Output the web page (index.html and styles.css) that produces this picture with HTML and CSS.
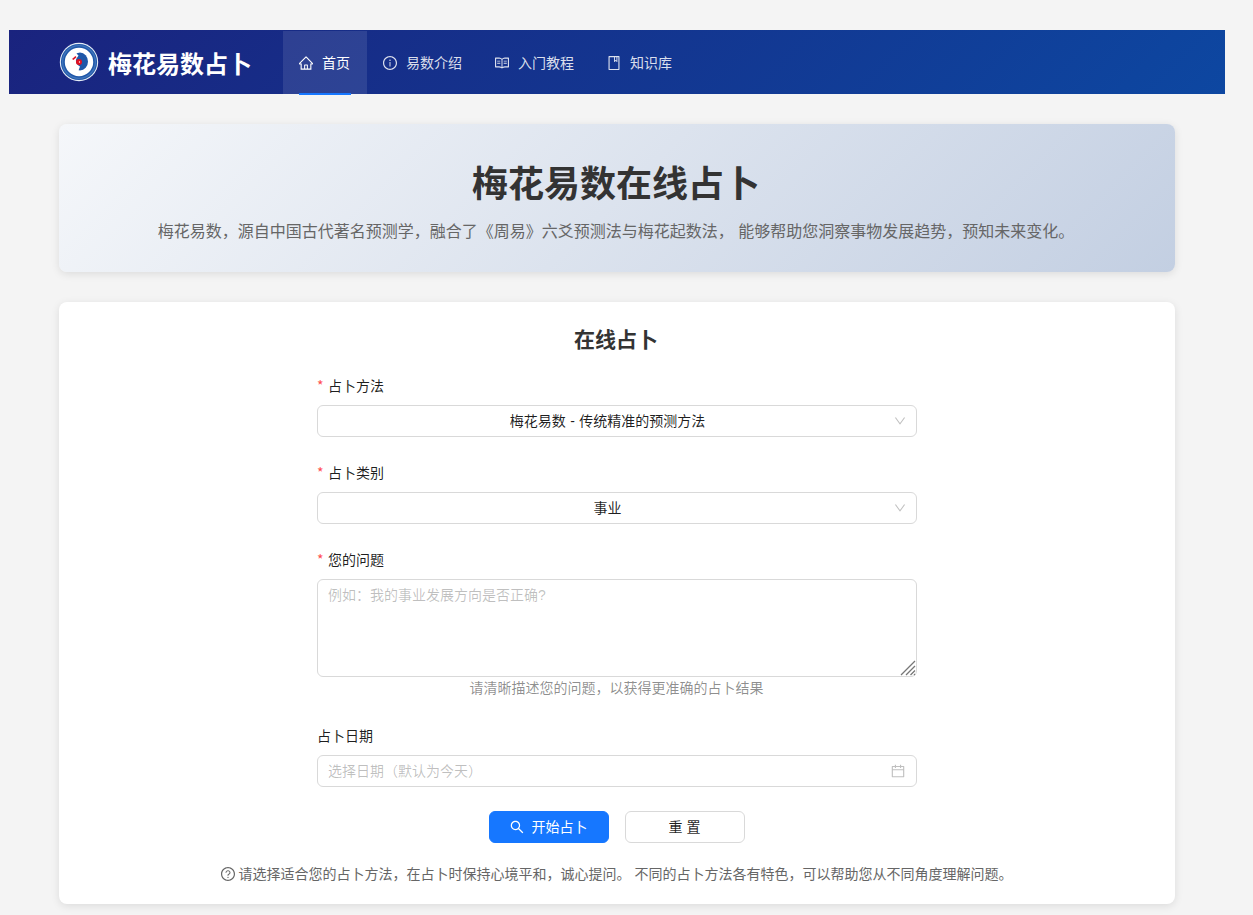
FILE: index.html
```
<!DOCTYPE html>
<html lang="zh-CN">
<head>
    <meta charset="UTF-8">
    <meta name="viewport" content="width=device-width, initial-scale=1.0">
    <title>梅花易数占卜</title>
    <link rel="stylesheet" href="styles.css">
</head>
<body>

    <header class="header">
        <div class="logo">
            <svg class="logo-img" viewBox="0 0 40 40">
                <circle cx="20" cy="20" r="19.2" fill="#e6edf6"/>
                <circle cx="20" cy="20" r="18.1" fill="#1f57a8"/>
                <circle cx="20" cy="20" r="16.4" fill="none" stroke="#3f74bb" stroke-width="1.4"/>
                <circle cx="20" cy="20" r="14.2" fill="#fff"/>
                <ellipse cx="21" cy="19.5" rx="8" ry="9" fill="#1f57a8"/>
                <path d="M12 14l5-3 2.500 2.500-2 3c-1.500 3 0 6 3.500 8l-1.500 4c-6-.5-9-8-7.500-14.500z" fill="#fff"/>
                <path d="M13 17l3.500-3 1 1.200-3 2.800z" fill="#e01022"/>
                <circle cx="20" cy="20" r="3" fill="#e01022"/>
                <circle cx="20.500" cy="20" r="0.700" fill="#fff"/>
            </svg>
            <span class="logo-text">梅花易数占卜</span>
        </div>
        <nav class="menu">
            <a class="menu-item active">
                <svg class="icon" viewBox="64 64 896 896"><path d="M946.5 505L560.1 118.8l-25.9-25.9a31.5 31.5 0 00-44.4 0L77.5 505a63.9 63.9 0 00-18.8 46c.4 35.2 29.7 63.3 64.9 63.3h42.5V940h691.8V614.3h43.4c17.1 0 33.2-6.7 45.3-18.8a63.6 63.6 0 0018.7-45.3c0-17-6.7-33.1-18.8-45.2zM568 868H456V664h112v204zm217.9-325.7V868H632V640c0-22.1-17.9-40-40-40H432c-22.1 0-40 17.9-40 40v228H238.1V542.3h-96l370-369.7 23.1 23.1L882 542.3h-96.1z"/></svg>
                <span>首页</span>
            </a>
            <a class="menu-item">
                <svg class="icon" viewBox="64 64 896 896"><path d="M512 64C264.6 64 64 264.6 64 512s200.6 448 448 448 448-200.6 448-448S759.4 64 512 64zm0 820c-205.4 0-372-166.6-372-372s166.6-372 372-372 372 166.6 372 372-166.6 372-372 372z"/><path d="M464 336a48 48 0 1096 0 48 48 0 10-96 0zm72 112h-48c-4.4 0-8 3.6-8 8v272c0 4.4 3.6 8 8 8h48c4.4 0 8-3.6 8-8V456c0-4.4-3.6-8-8-8z"/></svg>
                <span>易数介绍</span>
            </a>
            <a class="menu-item">
                <svg class="icon" viewBox="64 64 896 896"><path d="M928 161H699.2c-49.1 0-97.1 14.1-138.4 40.7L512 233l-48.8-31.3A255.2 255.2 0 00324.8 161H96c-17.7 0-32 14.3-32 32v568c0 17.7 14.3 32 32 32h228.8c49.1 0 97.1 14.1 138.4 40.7l44.4 28.6c1.3.8 2.8 1.3 4.3 1.3s3-.4 4.3-1.3l44.4-28.6C602 807.1 650.1 793 699.2 793H928c17.7 0 32-14.3 32-32V193c0-17.7-14.3-32-32-32zM324.8 721H136V233h188.8c35.4 0 69.8 10.1 99.5 29.2l48.8 31.3 6.9 4.5v462c-47.6-25.6-100.8-39-155.2-39zm563.2 0H699.2c-54.4 0-107.6 13.4-155.2 39V298l6.9-4.5 48.8-31.3c29.7-19.1 64.1-29.2 99.5-29.2H888v488zM396.9 361H211.1c-3.9 0-7.1 3.4-7.1 7.5v45c0 4.1 3.2 7.5 7.1 7.5h185.7c3.9 0 7.1-3.4 7.1-7.5v-45c.1-4.1-3.1-7.5-7-7.5zm223.1 7.5v45c0 4.1 3.2 7.5 7.1 7.5h185.7c3.9 0 7.1-3.4 7.1-7.5v-45c0-4.1-3.2-7.5-7.1-7.5H627.1c-3.9 0-7.1 3.4-7.1 7.5zM396.9 501H211.1c-3.9 0-7.1 3.4-7.1 7.5v45c0 4.1 3.2 7.5 7.1 7.5h185.7c3.9 0 7.1-3.4 7.1-7.5v-45c.1-4.1-3.1-7.5-7-7.5zm416 0H627.1c-3.9 0-7.1 3.4-7.1 7.5v45c0 4.1 3.2 7.5 7.1 7.5h185.7c3.9 0 7.1-3.4 7.1-7.5v-45c.1-4.1-3.1-7.5-7-7.5z"/></svg>
                <span>入门教程</span>
            </a>
            <a class="menu-item">
                <svg class="icon" viewBox="64 64 896 896"><path d="M832 64H192c-17.7 0-32 14.3-32 32v832c0 17.7 14.3 32 32 32h640c17.7 0 32-14.3 32-32V96c0-17.7-14.3-32-32-32zm-260 72h96v209.9L621.5 312 572 347.4V136zm220 752H232V136h280v296.9c0 3.3 1 6.6 3 9.3a15.9 15.9 0 0022.3 3.7l83.8-59.9 81.4 59.4c2.7 2 6 3.1 9.4 3.1 8.8 0 16-7.2 16-16V136h64v752z"/></svg>
                <span>知识库</span>
            </a>
        </nav>
    </header>

    <main class="content">
        <section class="banner">
            <h1>梅花易数在线占卜</h1>
            <p>梅花易数，源自中国古代著名预测学，融合了《周易》六爻预测法与梅花起数法， 能够帮助您洞察事物发展趋势，预知未来变化。</p>
        </section>

        <section class="card">
            <h2>在线占卜</h2>
            <form class="form">
                <div class="form-item">
                    <label class="required">占卜方法</label>
                    <div class="select">
                        <span class="select-value">梅花易数 - 传统精准的预测方法</span>
                        <svg class="arrow" viewBox="64 64 896 896"><path d="M884 256h-75c-5.1 0-9.9 2.5-12.9 6.6L512 654.2 227.9 262.6c-3-4.1-7.8-6.6-12.9-6.6h-75c-6.5 0-10.3 7.4-6.5 12.7l352.6 486.1c12.8 17.6 39 17.6 51.7 0l352.6-486.1c3.9-5.3.1-12.7-6.4-12.7z"/></svg>
                    </div>
                </div>
                <div class="form-item">
                    <label class="required">占卜类别</label>
                    <div class="select">
                        <span class="select-value">事业</span>
                        <svg class="arrow" viewBox="64 64 896 896"><path d="M884 256h-75c-5.1 0-9.9 2.5-12.9 6.6L512 654.2 227.9 262.6c-3-4.1-7.8-6.6-12.9-6.6h-75c-6.5 0-10.3 7.4-6.5 12.7l352.6 486.1c12.8 17.6 39 17.6 51.7 0l352.6-486.1c3.9-5.3.1-12.7-6.4-12.7z"/></svg>
                    </div>
                </div>
                <div class="form-item">
                    <label class="required" for="question">您的问题</label>
                    <div class="textarea-wrap">
                        <textarea id="question" placeholder="例如：我的事业发展方向是否正确?"></textarea>
                        <svg class="grip" viewBox="0 0 16 16"><path d="M1 15L15 1M6 15l9-9M10.5 15l4.5-4.5M14 15l1-1"/></svg>
                    </div>
                    <div class="extra">请清晰描述您的问题，以获得更准确的占卜结果</div>
                </div>
                <div class="form-item">
                    <label for="date">占卜日期</label>
                    <div class="picker">
                        <input type="text" id="date" placeholder="选择日期（默认为今天）">
                        <svg class="icon" viewBox="64 64 896 896"><path d="M880 184H712v-64c0-4.4-3.6-8-8-8h-56c-4.4 0-8 3.6-8 8v64H384v-64c0-4.4-3.6-8-8-8h-56c-4.4 0-8 3.6-8 8v64H144c-17.7 0-32 14.3-32 32v664c0 17.7 14.3 32 32 32h736c17.7 0 32-14.3 32-32V216c0-17.7-14.3-32-32-32zm-40 656H184V460h656v380zM184 392V256h128v48c0 4.4 3.6 8 8 8h56c4.4 0 8-3.6 8-8v-48h256v48c0 4.4 3.6 8 8 8h56c4.4 0 8-3.6 8-8v-48h128v136H184z"/></svg>
                    </div>
                </div>
                <div class="buttons">
                    <button type="button" class="btn primary">
                        <svg class="icon" viewBox="64 64 896 896"><path d="M909.6 854.5L649.9 594.8C690.2 542.7 712 479 712 412c0-80.2-31.3-155.4-87.9-212.1-56.6-56.7-132-87.9-212.1-87.9s-155.5 31.3-212.1 87.9C143.2 256.5 112 331.8 112 412c0 80.1 31.3 155.5 87.9 212.1C256.5 680.8 331.8 712 412 712c67 0 130.6-21.8 182.7-62l259.7 259.6a8.2 8.2 0 0011.6 0l43.6-43.5a8.2 8.2 0 000-11.6zM570.4 570.4C528 612.7 471.8 636 412 636s-116-23.3-158.4-65.6C211.3 528 188 471.8 188 412s23.3-116.1 65.6-158.4C296 211.3 352.2 188 412 188s116.1 23.2 158.4 65.6S636 352.2 636 412s-23.3 116.1-65.6 158.4z"/></svg>
                        <span>开始占卜</span>
                    </button>
                    <button type="reset" class="btn">重 置</button>
                </div>
            </form>
            <div class="tip">
                <svg class="icon" viewBox="64 64 896 896"><path d="M512 64C264.6 64 64 264.6 64 512s200.6 448 448 448 448-200.6 448-448S759.4 64 512 64zm0 820c-205.4 0-372-166.6-372-372s166.6-372 372-372 372 166.6 372 372-166.6 372-372 372z"/><path d="M623.6 316.7C593.6 290.4 554 276 512 276s-81.6 14.5-111.6 40.7C369.2 344 352 380.7 352 420v7.6c0 4.4 3.6 8 8 8h48c4.4 0 8-3.6 8-8V420c0-44.1 43.1-80 96-80s96 35.9 96 80c0 31.1-22 59.6-56.1 72.7-21.2 8.1-39.2 22.3-52.1 40.9-13.1 19-19.9 41.8-19.9 64.9V620c0 4.4 3.6 8 8 8h48c4.4 0 8-3.6 8-8v-22.7a48.3 48.3 0 0130.9-44.8c59-22.7 97.1-74.7 97.1-132.5.1-39.3-17.1-76-48.3-103.3zM472 732a40 40 0 1080 0 40 40 0 10-80 0z"/></svg>
                <span>请选择适合您的占卜方法，在占卜时保持心境平和，诚心提问。 不同的占卜方法各有特色，可以帮助您从不同角度理解问题。</span>
            </div>
        </section>
    </main>

</body>
</html>
```
FILE: styles.css
```
* {
    box-sizing: border-box;
}

body {
    margin: 0;
    padding: 30px 28px 0 9px;
    background-color: #f4f4f4;
    font-family: 'Liberation Sans', 'Noto Sans CJK SC', sans-serif;
    font-size: 14px;
    line-height: 22px;
    color: rgba(0, 0, 0, 0.88);
}

.icon {
    width: 14px;
    height: 14px;
    flex: none;
    fill: currentColor;
}

/* header */
.header {
    display: flex;
    height: 64px;
    padding: 0 50px;
    background: linear-gradient(135deg, #1a237e 0%, #0d47a1 100%);
}

.logo {
    display: flex;
    align-items: center;
    margin-right: 31px;
}

.logo-img {
    width: 40px;
    height: 40px;
    margin-right: 9px;
}

.logo-text {
    padding-top: 5px;
    font-size: 24px;
    font-weight: bold;
    line-height: 59px;
    color: #fff;
}

.menu {
    display: flex;
}

.menu-item {
    display: flex;
    align-items: center;
    gap: 9px;
    padding: 2px 17px 0 16px;
    color: rgba(255, 255, 255, 0.85);
}

.menu-item.active {
    position: relative;
    margin-top: 1px;
    padding-top: 1px;
    background-color: rgba(255, 255, 255, 0.1);
    color: #fff;
}

.menu-item.active::after {
    content: "";
    position: absolute;
    left: 16px;
    right: 16px;
    bottom: -1px;
    height: 2px;
    background-color: #1677ff;
}

.content {
    padding: 30px 50px 11px;
}

/* banner */
.banner {
    height: 148px;
    margin-bottom: 30px;
    padding-top: 37px;
    border-radius: 8px;
    background: linear-gradient(135deg, #f5f7fa 0%, #c3cfe2 100%);
    box-shadow: 0 2px 8px rgba(0, 0, 0, 0.1);
    text-align: center;
}

.banner h1 {
    margin: 0 2px 10px 0;
    font-size: 36px;
    line-height: 48px;
    color: #333;
}

.banner p {
    margin: 0 2px 0 0;
    font-size: 16px;
    line-height: 26px;
    color: #666;
}

/* form card */
.card {
    height: 602px;
    padding-top: 24px;
    border-radius: 8px;
    background-color: #fff;
    box-shadow: 0 2px 8px rgba(0, 0, 0, 0.1);
}

.card h2 {
    margin: 0 2px 21px 0;
    font-size: 21px;
    line-height: 28px;
    text-align: center;
    color: #333;
}

.form {
    width: 600px;
    margin: 0 auto;
}

.form-item {
    margin-bottom: 25px;
}

.form-item label {
    display: block;
    height: 22px;
    margin-bottom: 8px;
}

.required::before {
    content: "*";
    display: inline-block;
    width: 6px;
    margin-right: 5px;
    font-family: 'Noto Sans CJK SC', sans-serif;
    line-height: 1;
    color: #ff4d4f;
}

.select,
.picker {
    display: flex;
    align-items: center;
    height: 32px;
    padding: 0 10px;
    border: 1px solid #d9d9d9;
    border-radius: 6px;
}

.select-value {
    flex: 1;
    padding-right: 7px;
    text-align: center;
    word-spacing: 0.5px;
}

.arrow {
    width: 12px;
    height: 12px;
    fill: rgba(0, 0, 0, 0.25);
}

.textarea-wrap {
    position: relative;
    height: 98px;
}

textarea {
    display: block;
    width: 100%;
    height: 98px;
    padding: 4px 10px;
    border: 1px solid #d9d9d9;
    border-radius: 6px;
    font: inherit;
    resize: none;
    outline: none;
}

.grip {
    position: absolute;
    right: 1px;
    bottom: 1px;
    width: 16px;
    height: 16px;
    fill: none;
    stroke: #777;
    stroke-width: 1.3;
}

input {
    flex: 1;
    padding: 0;
    border: none;
    outline: none;
    font: inherit;
}

textarea::placeholder,
input::placeholder {
    color: rgba(0, 0, 0, 0.25);
}

.picker .icon {
    margin-right: 1px;
    color: rgba(0, 0, 0, 0.25);
}

.extra {
    padding: 0 1px 1px 0;
    text-align: center;
    color: rgba(0, 0, 0, 0.45);
}

.buttons {
    display: flex;
    justify-content: center;
    gap: 16px;
    margin-top: -1px;
}

.btn {
    display: flex;
    justify-content: center;
    align-items: center;
    gap: 8px;
    width: 120px;
    height: 32px;
    padding: 0 1px 0 0;
    border: 1px solid #d9d9d9;
    border-radius: 6px;
    background-color: #fff;
    font: inherit;
    color: rgba(0, 0, 0, 0.88);
}

.btn.primary {
    border-color: #1677ff;
    background-color: #1677ff;
    color: #fff;
}

.tip {
    display: flex;
    justify-content: center;
    align-items: center;
    gap: 4px;
    margin-top: 20px;
    padding-right: 1px;
    color: #666;
}
```
